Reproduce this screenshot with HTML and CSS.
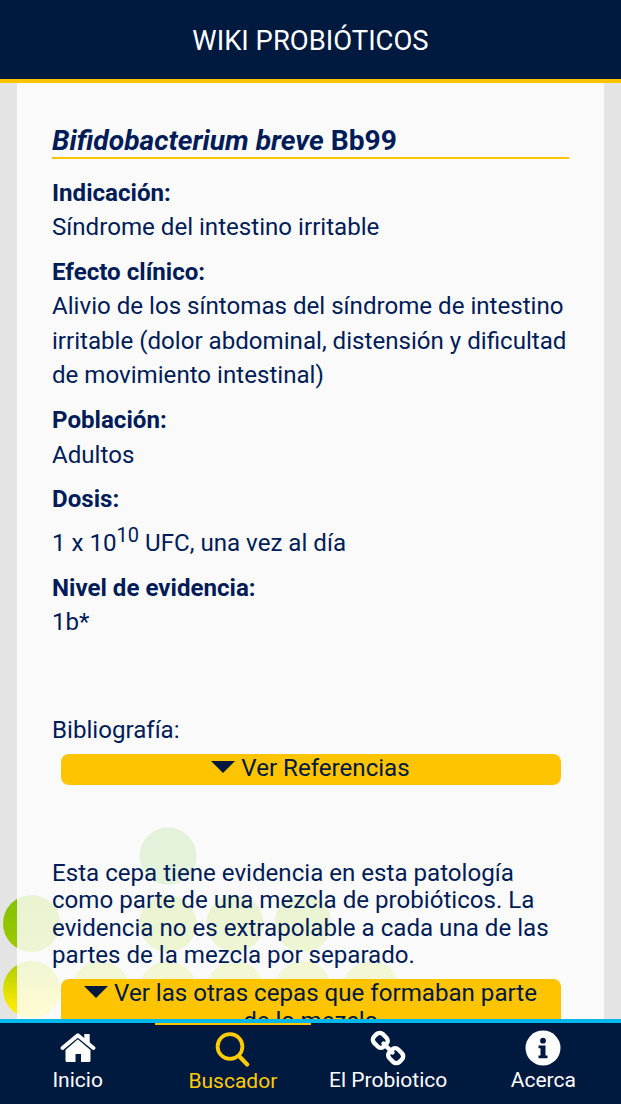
FILE: index.html
```html
<!DOCTYPE html>
<html lang="es">
<head>
    <meta charset="UTF-8">
    <meta name="viewport" content="width=device-width, initial-scale=1.0">
    <title>Wiki Probióticos</title>
    <link rel="stylesheet" href="styles.css">
</head>
<body>
    <header class="header">WIKI PROBIÓTICOS</header>

    <main class="main">
        <svg class="dots" width="400" height="200" viewBox="0 0 400 200">
            <defs>
                <linearGradient id="lime" x1="0" y1="0" x2="0" y2="1">
                    <stop offset="0" stop-color="#84c000"/>
                    <stop offset="1" stop-color="#9cca00"/>
                </linearGradient>
                <linearGradient id="yellow" x1="0" y1="0" x2="0" y2="1">
                    <stop offset="0" stop-color="#a8cc00"/>
                    <stop offset="0.7" stop-color="#f2e600"/>
                    <stop offset="1" stop-color="#fff000"/>
                </linearGradient>
            </defs>
            <circle cx="168" cy="36" r="28.5" fill="#5cb830"/>
            <g fill="url(#lime)">
                <circle cx="31.5" cy="103.5" r="28.5"/>
                <circle cx="168" cy="103.5" r="28.5"/>
                <circle cx="235" cy="103.5" r="28.5"/>
                <circle cx="303" cy="103.5" r="28.5"/>
            </g>
            <g fill="url(#yellow)">
                <circle cx="31.5" cy="169.5" r="28.5"/>
                <circle cx="100.5" cy="169.5" r="28.5"/>
                <circle cx="168" cy="169.5" r="28.5"/>
                <circle cx="235" cy="169.5" r="28.5"/>
                <circle cx="303" cy="169.5" r="28.5"/>
                <circle cx="371" cy="169.5" r="28.5"/>
            </g>
        </svg>

        <div class="card">
            <h1><i>Bifidobacterium breve</i> Bb99</h1>
            <p><b>Indicación:</b><br>Síndrome del intestino irritable</p>
            <p><b>Efecto clínico:</b><br>Alivio de los síntomas del síndrome de intestino<br>irritable (dolor abdominal, distensión y dificultad<br>de movimiento intestinal)</p>
            <p><b>Población:</b><br>Adultos</p>
            <p class="dose"><b>Dosis:</b><br><span>1 x 10<sup>10</sup> UFC, una vez al día</span></p>
            <p><b>Nivel de evidencia:</b><br>1b*</p>

            <div class="biblio">Bibliografía:</div>
            <button class="toggle"><span class="arrow"></span>Ver Referencias</button>

            <div class="note">Esta cepa tiene evidencia en esta patología<br>como parte de una mezcla de probióticos. La<br>evidencia no es extrapolable a cada una de las<br>partes de la mezcla por separado.</div>
            <button class="toggle"><span class="arrow"></span>Ver las otras cepas que formaban parte<br>de la mezcla</button>
        </div>
    </main>

    <nav class="tabs">
        <a class="tab">
            <svg width="36" height="36" viewBox="0 0 36 36">
                <path d="M2.500 18 L17.800 5.200 L33.500 18" fill="none" stroke="#fff" stroke-width="3.800" stroke-linejoin="round" stroke-linecap="round"/>
                <path d="M24.300 4h5.400v12l-5.400-4.700z" fill="#fff"/>
                <path d="M17.800 9.300 L30.500 20 V30.500 a1.500 1.500 0 0 1-1.500 1.500 H21 V24 H15.500 V32 H7 a1.500 1.500 0 0 1-1.500-1.500 V20z" fill="#fff"/>
            </svg>
            <span>Inicio</span>
        </a>
        <a class="tab active">
            <svg width="36" height="36" viewBox="0 0 36 36">
                <circle cx="15" cy="14.500" r="12.400" fill="none" stroke="#ffcb05" stroke-width="3.800"/>
                <path d="M24 24 L32.200 32.500" stroke="#ffcb05" stroke-width="4.200" stroke-linecap="round"/>
            </svg>
            <span>Buscador</span>
        </a>
        <a class="tab">
            <svg width="36" height="36" viewBox="0 0 36 36">
                <g fill="none" stroke="#fff" stroke-width="4.400">
                    <rect x="-7" y="-6.200" width="14" height="12.400" rx="4.500" transform="translate(10.300 10.300) rotate(45)"/>
                    <rect x="-7" y="-6.200" width="14" height="12.400" rx="4.500" transform="translate(25.700 25.700) rotate(45)"/>
                    <path d="M13.500 13.500 L22.500 22.500" stroke-linecap="round"/>
                </g>
            </svg>
            <span>El Probiotico</span>
        </a>
        <a class="tab">
            <svg width="36" height="36" viewBox="0 0 36 36">
                <circle cx="18" cy="18" r="17.500" fill="#fff"/>
                <circle cx="18" cy="10.700" r="2.900" fill="#00193f"/>
                <path d="M13.500 15.500h7v10h2v2.800h-9v-2.800h2v-7.200h-2z" fill="#00193f"/>
            </svg>
            <span>Acerca</span>
        </a>
    </nav>
</body>
</html>
```

FILE: styles.css
```css
* {
    box-sizing: border-box;
}
body {
    margin: 0;
    height: 1104px;
    display: flex;
    flex-direction: column;
    overflow: hidden;
    font-family: Roboto, sans-serif;
    font-size: 24.12px;
    color: #001c58;
    background-color: #e4e4e4;
}
.header {
    flex: none;
    height: 83px;
    padding-top: 1px;
    line-height: 81px;
    text-align: center;
    font-size: 27.45px;
    color: white;
    background-color: #00193f;
    border-bottom: 4px solid #ffc400;
}
.main {
    position: relative;
    flex: 1;
    min-height: 0;
    overflow: hidden;
    padding: 0 17px;
}
.dots {
    position: absolute;
    left: 0;
    top: 737px;
}
.card {
    position: relative;
    height: 1100px;
    padding: 40px 35px 0;
    background-color: rgba(254,254,254,0.83);
}
h1 {
    margin: 0 0 16.5px;
    height: 36px;
    line-height: 36px;
    font-size: 28.2px;
    font-weight: bold;
    border-bottom: 2px solid #ffc400;
    white-space: nowrap;
}
p {
    margin: 0 0 10.3px;
    line-height: 34.5px;
    white-space: nowrap;
}
.dose span {
    display: inline-block;
    padding-top: 9px;
}
sup {
    font-size: 20px;
    line-height: 0;
}
.biblio {
    margin-top: 76.5px;
    line-height: 28px;
}
.toggle {
    display: block;
    width: 500px;
    margin: 10px 0 0 8.5px;
    padding: 0 0 3px;
    border: none;
    border-radius: 8px;
    font-family: inherit;
    font-size: 24.12px;
    line-height: 28px;
    color: #00193f;
    background-color: #ffc400;
    white-space: nowrap;
}
.arrow {
    display: inline-block;
    margin-right: 6px;
    vertical-align: 3px;
    border-left: 12px solid transparent;
    border-right: 12px solid transparent;
    border-top: 12px solid #00193f;
}
.note {
    margin-top: 74.5px;
    line-height: 27.6px;
    white-space: nowrap;
}
.note + .toggle {
    margin-top: 9px;
}
.tabs {
    flex: none;
    display: flex;
    height: 85px;
    background-color: #00193f;
    border-top: 4px solid #00b8ec;
}
.tab {
    flex: 1;
    display: flex;
    flex-direction: column;
    align-items: center;
    padding-top: 7px;
    font-size: 21px;
    line-height: 28px;
    color: white;
}
.tab.active {
    line-height: 27px;
    border-top: 2px solid #ffc400;
    color: #ffcb05;
}
```
